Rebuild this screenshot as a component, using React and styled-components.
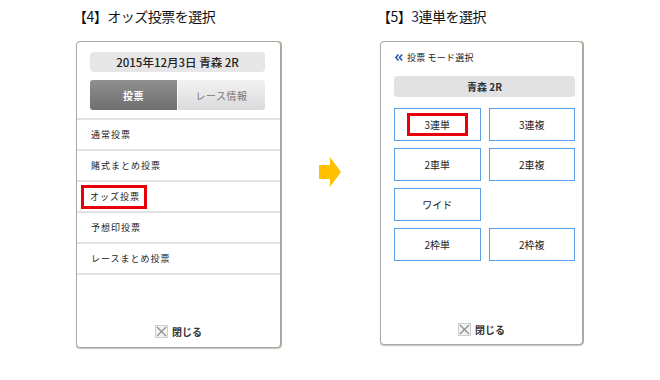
import React from 'react'
import styled, { createGlobalStyle } from 'styled-components'

const GlobalStyle = createGlobalStyle`
  html, body {
    margin: 0;
    padding: 0;
    background: #fff;
  }
  body {
    font-family: "Noto Sans CJK JP", "Noto Sans", sans-serif;
    color: #222;
  }
`

const Page = styled.div`
  width: 660px;
  height: 380px;
  display: flex;
  padding: 6px 0 0 73px;
  box-sizing: border-box;
`

const Column = styled.div`
  width: ${p => p.width}px;
  display: flex;
  flex-direction: column;
`

const Title = styled.div`
  height: 20px;
  line-height: 20px;
  font-size: 14px;
  letter-spacing: -0.5px;
  color: #111;
  white-space: nowrap;
  .num {
    color: #1d2f6b;
  }
`

const Card = styled.div`
  margin: 15px 0 0 3px;
  width: ${p => p.width}px;
  height: ${p => p.height}px;
  box-sizing: border-box;
  border: 1px solid #a9a9a9;
  border-radius: 4px;
  box-shadow: 1px 0 0 #c2a873, 0 1px 1px rgba(0, 0, 0, 0.25);
  background: #fff;
  display: flex;
  flex-direction: column;
`

const CardTop = styled.div`
  padding: 10px 15px 8px 13px;
  display: flex;
  flex-direction: column;
  gap: 8px;
`

const DateBar = styled.div`
  height: 20px;
  border-radius: 4px;
  background: #e6e6e6;
  font-size: 11.5px;
  font-weight: 500;
  display: flex;
  align-items: center;
  justify-content: center;
  color: #222;
`

const Tabs = styled.div`
  display: flex;
  height: 30px;
`

const Tab = styled.div`
  flex: 1;
  display: flex;
  align-items: center;
  justify-content: center;
  font-size: 10px;
  letter-spacing: 0.5px;
  color: ${p => (p.active ? '#fff' : '#777')};
  font-weight: ${p => (p.active ? 700 : 400)};
  background: ${p =>
    p.active
      ? 'linear-gradient(#8f8f8f, #6f6f6f)'
      : 'linear-gradient(#f2f2f2, #dadada)'};
  border-radius: ${p => (p.active ? '3px 0 0 3px' : '0 3px 3px 0')};
  border-left: ${p => (p.active ? 'none' : '1px solid #f8f8f8')};
`

const MenuList = styled.ul`
  list-style: none;
  margin: 0;
  padding: 0;
  border-bottom: 2px solid #e2e2e2;
`

const MenuItem = styled.li`
  height: 29px;
  border-top: 2px solid #e2e2e2;
  display: flex;
  align-items: center;
  padding-left: ${p => (p.marked ? '4px' : '14px')};
  font-size: 9px;
  letter-spacing: 1px;
  color: #222;
`

const Marked = styled.span`
  display: inline-flex;
  align-items: center;
  height: 18px;
  padding: 0 4px 0 6px;
  border: 3px solid #e8000b;
`

const Footer = styled.div`
  margin-top: auto;
  padding-bottom: ${p => p.bottom}px;
  display: flex;
  justify-content: center;
  align-items: center;
  gap: 4px;
  font-size: 10px;
  font-weight: 700;
  color: #333;
`

const CloseBox = styled.span`
  width: 13px;
  height: 13px;
  box-sizing: border-box;
  border: 1px solid #cfcfcf;
  background: #f3f3f3;
  display: flex;
  align-items: center;
  justify-content: center;
`

const ArrowCol = styled.div`
  width: 96px;
  padding: 151px 0 0 38px;
  box-sizing: border-box;
`

const ModeHeader = styled.div`
  height: 14px;
  margin: 8px 0 12px 14px;
  display: flex;
  align-items: center;
  gap: 4px;
  font-size: 9px;
  letter-spacing: 0.2px;
  color: #222;
`

const ModeBody = styled.div`
  padding: 0 7px 0 13px;
`

const RaceBar = styled.div`
  height: 21px;
  border-radius: 4px;
  background: #e2e2e2;
  display: flex;
  align-items: center;
  justify-content: center;
  font-size: 10px;
  font-weight: 700;
  color: #333;
  margin-bottom: 11px;
`

const BetGrid = styled.div`
  display: grid;
  grid-template-columns: 1fr 1fr;
  grid-auto-rows: 33px;
  gap: 7px 8px;
`

const BetButton = styled.div`
  border: 1.5px solid #5a9fe6;
  background: #fff;
  display: flex;
  align-items: center;
  justify-content: center;
  font-size: 10px;
  color: #222;
`

const BetMarked = styled.span`
  display: inline-flex;
  align-items: center;
  justify-content: center;
  width: 61px;
  height: 23px;
  box-sizing: border-box;
  border: 3px solid #e8000b;
`

const CloseIcon = () => (
  <CloseBox>
    <svg width="11" height="11" viewBox="0 0 11 11">
      <path d="M1 1 L10 10 M10 1 L1 10" stroke="#8c8c8c" strokeWidth="1.2" />
    </svg>
  </CloseBox>
)

const BackIcon = () => (
  <svg width="8" height="7" viewBox="0 0 8 7">
    <path d="M3.5 0.5 L0.8 3.5 L3.5 6.5 M7.2 0.5 L4.5 3.5 L7.2 6.5" fill="none" stroke="#2457b3" strokeWidth="1.6" />
  </svg>
)

const menuItems = ['通常投票', '賭式まとめ投票', 'オッズ投票', '予想印投票', 'レースまとめ投票']
const betTypes = ['3連単', '3連複', '2車単', '2車複', 'ワイド', null, '2枠単', '2枠複']

const App = () => {
  return (
    <>
      <GlobalStyle />
      <Page>
        <Column width={208}>
          <Title>【4】オッズ投票を選択</Title>
          <Card width={205} height={307}>
            <CardTop>
              <DateBar>2015年12月3日 青森 2R</DateBar>
              <Tabs>
                <Tab active>投票</Tab>
                <Tab>レース情報</Tab>
              </Tabs>
            </CardTop>
            <MenuList>
              {menuItems.map(item => (
                <MenuItem key={item} marked={item === 'オッズ投票'}>
                  {item === 'オッズ投票' ? <Marked>{item}</Marked> : item}
                </MenuItem>
              ))}
            </MenuList>
            <Footer bottom={8}>
              <CloseIcon />
              閉じる
            </Footer>
          </Card>
        </Column>

        <ArrowCol>
          <svg width="22" height="30" viewBox="0 0 22 30">
            <polygon points="0,8 11,8 11,0 22,15 11,30 11,22 0,22" fill="#ffc000" />
          </svg>
        </ArrowCol>

        <Column width={210}>
          <Title>
            【5】<span className="num">3</span>連単を選択
          </Title>
          <Card width={203} height={304}>
            <ModeHeader>
              <BackIcon />
              投票 モード選択
            </ModeHeader>
            <ModeBody>
              <RaceBar>青森 2R</RaceBar>
              <BetGrid>
                {betTypes.map((bet, i) =>
                  bet ? (
                    <BetButton key={i}>
                      {bet === '3連単' ? <BetMarked>{bet}</BetMarked> : bet}
                    </BetButton>
                  ) : (
                    <div key={i} />
                  )
                )}
              </BetGrid>
            </ModeBody>
            <Footer bottom={7}>
              <CloseIcon />
              閉じる
            </Footer>
          </Card>
        </Column>
      </Page>
    </>
  )
}

export default App
